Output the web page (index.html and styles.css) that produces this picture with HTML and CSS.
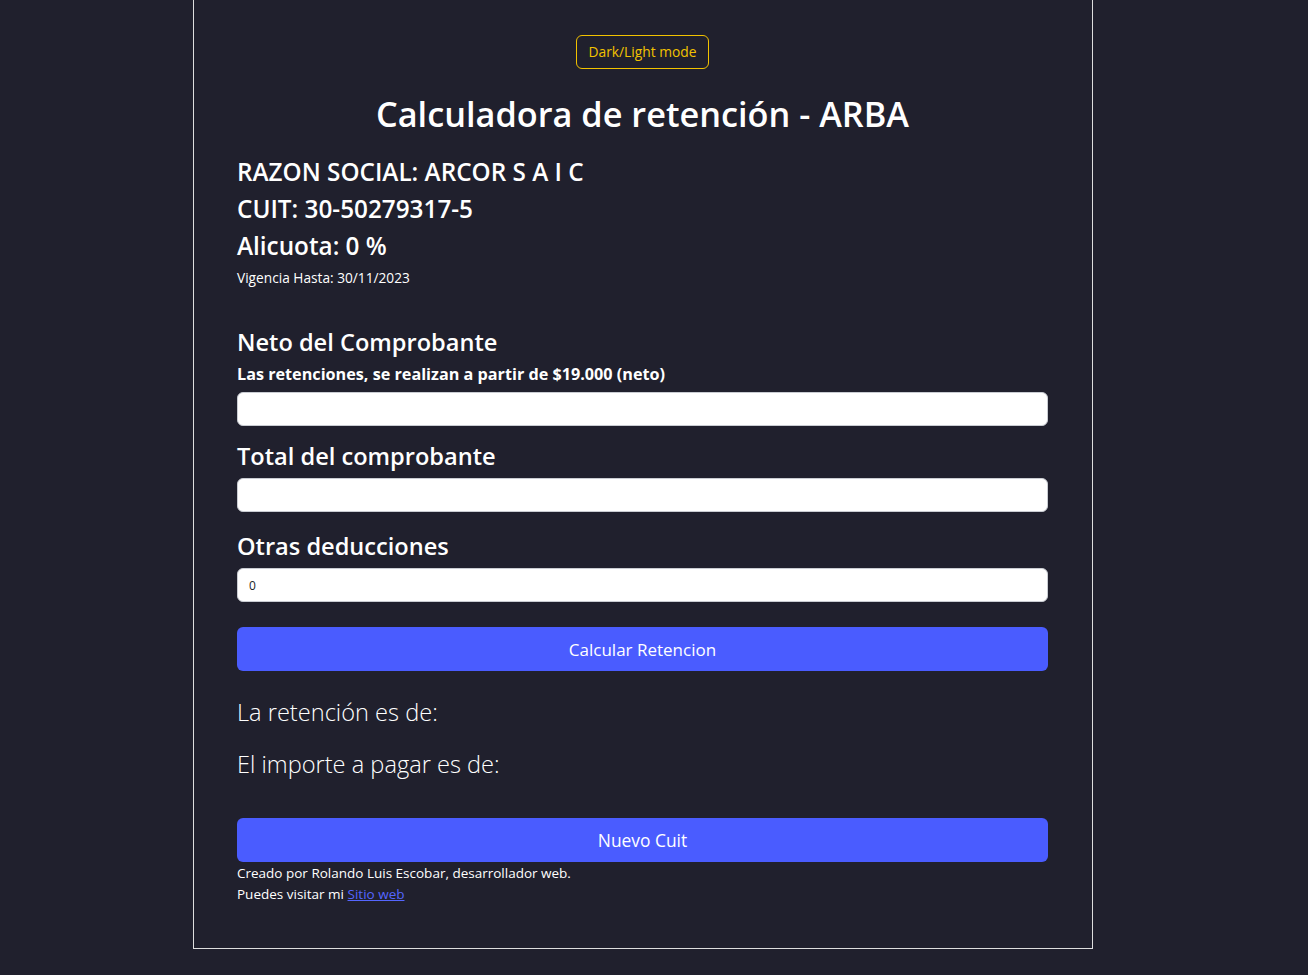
FILE: index.html
```html
<!DOCTYPE html>
<html lang="es">
<head>
<meta charset="utf-8">
<title>Calculadora de retención - ARBA</title>
<link rel="stylesheet" href="styles.css">
</head>
<body>
<main class="container">
  <div class="toggle-row"><button class="btn-toggle" type="button">Dark/Light mode</button></div>
  <h1 class="title">Calculadora de retención - ARBA</h1>
  <h4 class="info info-first">RAZON SOCIAL: ARCOR S A I C</h4>
  <h4 class="info">CUIT: 30-50279317-5</h4>
  <h4 class="info">Alicuota: 0 %</h4>
  <p class="vigencia">Vigencia Hasta: 30/11/2023</p>

  <label class="field-label label-first" for="neto">Neto del Comprobante</label>
  <p class="note">Las retenciones, se realizan a partir de $19.000 (neto)</p>
  <input class="field field-first" id="neto" type="text">

  <label class="field-label" for="total">Total del comprobante</label>
  <input class="field" id="total" type="text">

  <label class="field-label label-otras" for="otras">Otras deducciones</label>
  <input class="field" id="otras" type="text" value="0">

  <button class="btn-primary btn-calc" type="button">Calcular Retencion</button>

  <p class="result result-first">La retención es de:</p>
  <p class="result">El importe a pagar es de:</p>

  <button class="btn-primary btn-nuevo" type="button">Nuevo Cuit</button>
  <p class="credit credit-first">Creado por Rolando Luis Escobar, desarrollador web.</p>
  <p class="credit">Puedes visitar mi <a href="#">Sitio web</a></p>
</main>
</body>
</html>
```

FILE: styles.css
```css
* { box-sizing: border-box; }

html, body {
  margin: 0;
  padding: 0;
  background: #20202d;
}

body {
  font-family: "Open Sans", "Noto Sans", sans-serif;
  color: #ffffff;
  padding-right: 22px;
}

.container {
  width: 900px;
  margin: 0 auto;
  border: 1px solid #dedede;
  border-top: none;
  padding: 0 44px 43px 43px;
  display: flex;
  flex-direction: column;
}

.toggle-row {
  display: flex;
  justify-content: center;
  margin-top: 35px;
}

.btn-toggle {
  height: 34px;
  padding: 0 11px;
  background: transparent;
  border: 1px solid #f2c200;
  border-radius: 6px;
  color: #f2c200;
  font-family: inherit;
  font-size: 13.8px;
  line-height: 32px;
}

.title {
  margin: 21px 0 0;
  text-align: center;
  font-size: 34.3px;
  line-height: 48px;
  font-weight: 600;
}

.info {
  margin: 8px 0 0;
  font-size: 24.3px;
  line-height: 29px;
  font-weight: 600;
}
.info-first { margin-top: 19px; }

.vigencia {
  margin: 9px 0 0;
  font-size: 13.7px;
  line-height: 18px;
}

.field-label {
  display: block;
  margin-top: 16px;
  font-size: 23.6px;
  line-height: 29px;
  font-weight: 600;
}
.label-first { margin-top: 41px; }
.label-otras { margin-top: 20px; }

.note {
  margin: 7px 0 0;
  font-size: 16.2px;
  line-height: 20px;
  font-weight: 700;
}

.field {
  display: block;
  width: 100%;
  height: 34px;
  margin-top: 7px;
  padding: 0 11px;
  background: #ffffff;
  border: 1px solid #c9ccd2;
  border-radius: 6px;
  font-family: inherit;
  font-size: 12px;
  color: #212529;
}
.field-first { margin-top: 8px; }

.btn-primary {
  display: block;
  width: 100%;
  height: 44px;
  background: #4a5cff;
  border: none;
  border-radius: 6px;
  color: #ffffff;
  font-family: inherit;
  font-size: 17px;
  font-weight: 400;
}
.btn-nuevo { font-size: 17.4px; }
.btn-calc { margin-top: 25px; }
.btn-nuevo { margin-top: 39px; }

.result {
  margin: 23px 0 0;
  font-size: 23.6px;
  line-height: 29px;
  font-weight: 300;
}
.result-first { margin-top: 27px; }

.credit {
  margin: 0;
  font-size: 13.5px;
  line-height: 21px;
}
.credit-first { margin-top: 1px; }

.credit a {
  color: #5566ff;
  text-decoration: underline;
}
```
